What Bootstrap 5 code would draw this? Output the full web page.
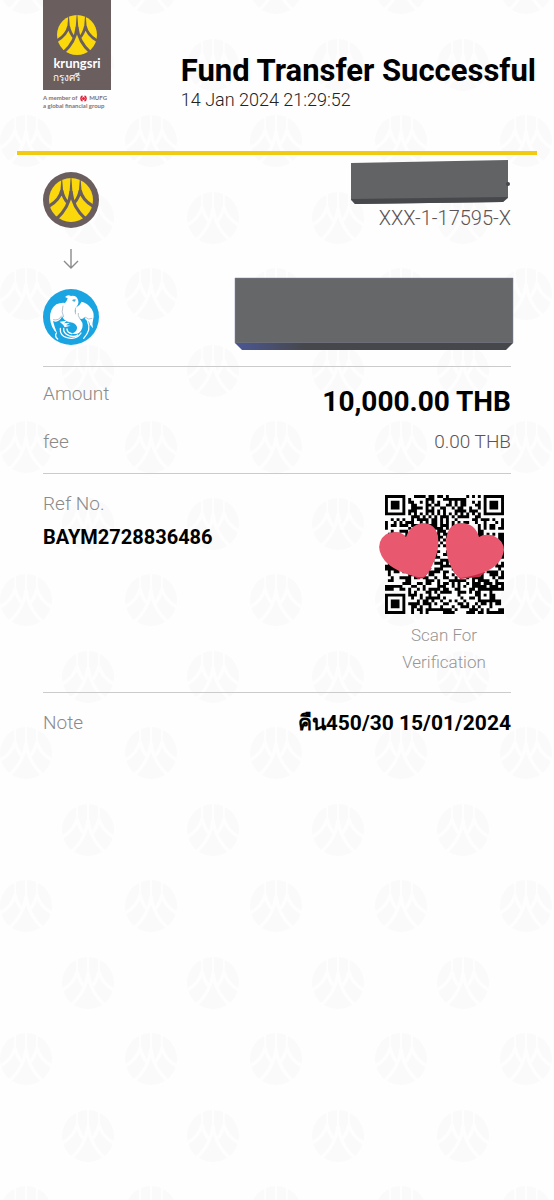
<!DOCTYPE html>
<html lang="en">
<head>
<meta charset="utf-8">
<meta name="viewport" content="width=device-width, initial-scale=1">
<title>Fund Transfer Successful</title>
<link href="https://cdn.jsdelivr.net/npm/bootstrap@5.3.0/dist/css/bootstrap.min.css" rel="stylesheet">
<style>
  body {
    font-family: Roboto, "Noto Sans", sans-serif;
    background-color: #fefefe;
    /* tiled brand emblem, two per tile in a staggered grid */
    background-image: url("data:image/svg+xml,%3Csvg xmlns='http://www.w3.org/2000/svg' width='125' height='153' viewBox='0 0 125 153'%3E%3Cdefs%3E%3Cg id='e'%3E%3Ccircle r='26' fill='%23fafafa'/%3E%3Cg transform='translate(-26 -26) scale(.52)' fill='none' stroke='%23fefefe' stroke-width='7'%3E%3Cpath d='M50 30Q46 68 16 94M50 30Q54 68 84 94M29 28Q24 50 0 64M29 28Q33 46 43 57M71 28Q76 50 100 64M71 28Q67 46 57 57'/%3E%3Cpath stroke-width='4' d='M50 0V40M29 4V38M71 4V38'/%3E%3C/g%3E%3C/g%3E%3C/defs%3E%3Cuse href='%23e' x='88' y='104'/%3E%3Cuse href='%23e' x='26' y='27'/%3E%3Cuse href='%23e' x='151' y='27'/%3E%3C/svg%3E");
    background-size: 125px 153px;
    background-position: 0 -39px;
    color: #000;
    line-height: 24px;
  }
  .slip-head { padding: 0 18px 40px 43px; }
  .brand-tile { width: 68px; height: 90px; background: #6b5e5e; color: #fff; padding-top: 15px; }
  .brand-tile svg { width: 40px; height: 40px; color: #6b5e5e; }
  .brand-name { font: 700 13px/17px Lato, sans-serif; }
  .brand-thai { font-size: 10px; line-height: 12px; width: 48px; }
  .brand-note { font: 700 6px/7px Lato, sans-serif; color: #7d7474; padding-top: 4px; white-space: nowrap; }
  .brand-note svg { width: 9px; height: 7px; }
  .slip-title { font-size: 31px; line-height: 36px; font-weight: 700; margin: 53px 0 0; }
  .slip-date { font-size: 18px; line-height: 22px; font-weight: 300; color: #222; }
  .gold-rule { height: 4px; margin: 0 17px; background: #f1cb12; }
  .slip-body { padding: 0 43px; }
  .route { padding-bottom: 15px; }
  .route-icons { padding-top: 17px; }
  .bank-icon { width: 56px; height: 56px; }
  .arrow { width: 16px; height: 22px; margin: 20px 20px 19px; }
  .from-party { padding-top: 5px; height: 122px; }
  .cover-small { width: 160px; height: 44px; }
  .cover-big { width: 280px; height: 74px; margin-right: -3px; }
  .thin { font-weight: 300; }
  .account { font-size: 20px; line-height: 28px; color: #5c5454; }
  .label-text { font-size: 19px; font-weight: 300; color: #8a8a8a; }
  .section { border-top: 1px solid #cbcbcb; }
  .sums { padding: 15px 0 19px; }
  .refs { padding: 18px 0 16px; }
  .notes { padding: 18px 0; }
  .total { font-size: 28px; line-height: 32px; font-weight: 700; }
  .fee { font-size: 19px; color: #5c5454; }
  .strong-text { font-size: 20px; font-weight: 700; padding-top: 9px; }
  .note-text { font-size: 21px; font-weight: 700; }
  .qr-col { width: 134px; padding-top: 3px; }
  .qr { width: 119px; height: 119px; overflow: visible; }
  .scan { font-size: 17px; line-height: 27px; color: #969696; font-weight: 300; padding-top: 8px; }
</style>
</head>
<body>
<svg class="d-none" aria-hidden="true">
  <symbol id="emblem" viewBox="0 0 100 100">
    <circle cx="50" cy="50" r="50" fill="#fad80c"/>
    <g fill="none" stroke="currentColor" stroke-width="7">
      <path d="M50 30Q46 68 16 94M50 30Q54 68 84 94M29 28Q24 50 0 64M29 28Q33 46 43 57M71 28Q76 50 100 64M71 28Q67 46 57 57"/>
    </g>
    <path fill="currentColor" d="M49 0h2l3 42h-8zM28 4h2l3 36h-8zM70 4h2l3 36h-8z"/>
  </symbol>
</svg>

<header class="slip-head d-flex justify-content-between">
  <div>
    <div class="brand-tile d-flex flex-column align-items-center">
      <svg role="img" aria-label="Krungsri emblem"><use href="#emblem"/></svg>
      <div class="brand-name">krungsri</div>
      <div class="brand-thai">กรุงศรี</div>
    </div>
    <div class="brand-note">A member of
      <svg viewBox="0 0 18 14" aria-hidden="true"><path fill="none" stroke="#dc2038" stroke-width="3" d="M7 2A5.500 5.500 0 0 0 7 12M11 2A5.500 5.500 0 0 1 11 12"/><circle cx="9" cy="7" r="3" fill="#dc2038"/></svg>
      MUFG<br>a global financial group</div>
  </div>
  <div>
    <h1 class="slip-title">Fund Transfer Successful</h1>
    <div class="slip-date">14 Jan 2024 21:29:52</div>
  </div>
</header>
<div class="gold-rule"></div>

<main class="slip-body">
  <section class="route d-flex justify-content-between">
    <div class="route-icons d-flex flex-column">
      <svg class="bank-icon" viewBox="0 0 56 56" role="img" aria-label="Krungsri" color="#6b5e5e"><circle cx="28" cy="28" r="28" fill="#6b5e5e"/><use href="#emblem" x="6" y="6" width="44" height="44"/></svg>
      <svg class="arrow" viewBox="0 0 16 22" fill="none" stroke="#8b8b8b" stroke-width="1.400" aria-hidden="true"><path d="M8 1V20M1 13L8 20L15 13"/></svg>
      <svg class="bank-icon" viewBox="0 0 168 168" role="img" aria-label="Krungthai">
        <circle cx="84" cy="84" r="84" fill="#1ba4e2"/>
        <g fill="#fff">
          <path d="M66 24Q74 16 84 21Q102 18 106 36Q108 46 98 56Q112 48 116 38Q134 42 146 60Q156 76 150 94Q147 102 150 118Q140 110 138 98Q128 96 124 84Q120 94 108 88Q122 100 118 116Q110 140 86 134Q104 128 102 114Q98 102 82 100Q60 96 58 82Q46 104 30 96Q34 112 42 132Q24 120 21 88Q20 60 40 46Q54 40 66 42Q72 36 74 28Z"/>
          <path d="M50 98l22-3-9 8 18-2-12 8 14 1-18 5-4-7z"/>
        </g>
        <g fill="none" stroke="#fff" stroke-linecap="round" stroke-width="4">
          <path d="M52 118Q50 140 72 146Q100 154 114 132M62 118Q60 132 78 140Q94 146 104 138M40 132Q34 142 44 150M134 98Q146 122 122 148M72 120Q72 130 86 134"/>
        </g>
        <path d="M88 34Q92 30 98 32L94 38ZM98 56Q94 66 98 76" fill="#1ba4e2" stroke="#8cbcd6" stroke-width="2"/>
        <path d="M60 50Q54 70 62 84M30 92Q48 96 56 80M126 84Q136 94 148 88M110 88Q104 80 106 72" fill="none" stroke="#b8c3cc" stroke-width="3"/>
      </svg>
    </div>
    <div class="d-flex flex-column align-items-end">
      <div class="from-party d-flex flex-column align-items-end">
        <svg class="cover-small" viewBox="0 0 160 44" aria-hidden="true"><path fill="#626365" d="M0 3L157 0V38L152 42L4 44L0 40Z"/><path fill="#46484c" d="M0 39L157 37L152 42L4 44Z"/><circle cx="157" cy="24" r="2" fill="#46484c"/></svg>
        <div class="account thin">XXX-1-17595-X</div>
      </div>
      <svg class="cover-big" viewBox="0 0 280 74" aria-hidden="true"><defs><linearGradient id="edge"><stop offset="0" stop-color="#4b5795"/><stop offset=".25" stop-color="#46474b"/></linearGradient></defs><path fill="#666769" stroke="#7d82a0" stroke-width=".5" d="M1 1H279V66H1Z"/><path fill="url(#edge)" d="M1 66H279L272 73H8Z"/></svg>
    </div>
  </section>

  <section class="section sums">
    <div class="d-flex justify-content-between">
      <div class="label-text">Amount</div>
      <div class="total pt-1">10,000.00 THB</div>
    </div>
    <div class="d-flex justify-content-between pt-2 mt-1">
      <div class="label-text">fee</div>
      <div class="fee thin">0.00 THB</div>
    </div>
  </section>

  <section class="section refs d-flex justify-content-between">
    <div>
      <div class="label-text">Ref No.</div>
      <div class="strong-text">BAYM2728836486</div>
    </div>
    <div class="qr-col text-center">
      <svg class="qr d-block mx-auto" viewBox="0 0 119 119" role="img" aria-label="QR code">
        <path id="modules" transform="scale(2.902)"/>
        <path fill="#c92845" d="M22 77L33 84L39 83L47 73Z M68 76L75 84L94 82L101 77Z"/>
        <path fill="#e8596f" d="M33 82Q10 77 0 66Q-8 56 -5 47Q-1 37 10 37Q17 37 21 42Q25 30 37 28Q50 28 53 41Q55 55 47 71Q42 81 38 82Z"/>
        <path fill="#e8596f" d="M73 82Q61 68 61 51Q60 29 76 28Q90 28 94 42Q100 38 109 41Q119 46 119 55Q117 69 102 76Q90 81 76 83Z"/>
      </svg>
      <div class="scan">Scan For<br>Verification</div>
    </div>
  </section>

  <section class="section notes d-flex justify-content-between">
    <div class="label-text">Note</div>
    <div class="note-text">คืน450/30 15/01/2024</div>
  </section>
</main>

<script src="https://cdn.jsdelivr.net/npm/bootstrap@5.3.0/dist/js/bootstrap.bundle.min.js"></script>
<script>
  // 41 x 41 module grid: finder squares, timing lines, one alignment square and a decorative fill
  const N = 41;
  let seed = 20240114, d = '';
  const rnd = () => (seed = (seed * 48271) % 2147483647) / 2147483647;
  const ring = (x, y, cx, cy) => Math.max(Math.abs(x - cx), Math.abs(y - cy));
  for (let y = 0; y < N; y++) for (let x = 0; x < N; x++) {
    let on = rnd() < 0.5;
    if (x === 6 || y === 6) on = (x + y) % 2 === 0;
    const a = ring(x, y, 34, 34);
    if (a <= 2) on = a !== 1;
    for (const [cx, cy] of [[3, 3], [37, 3], [3, 37]]) {
      const r = ring(x, y, cx, cy);
      if (r <= 4) on = r < 2 || r === 3;
    }
    if (on) d += `M${x} ${y}h1v1h-1z`;
  }
  document.getElementById('modules').setAttribute('d', d);
</script>
</body>
</html>
